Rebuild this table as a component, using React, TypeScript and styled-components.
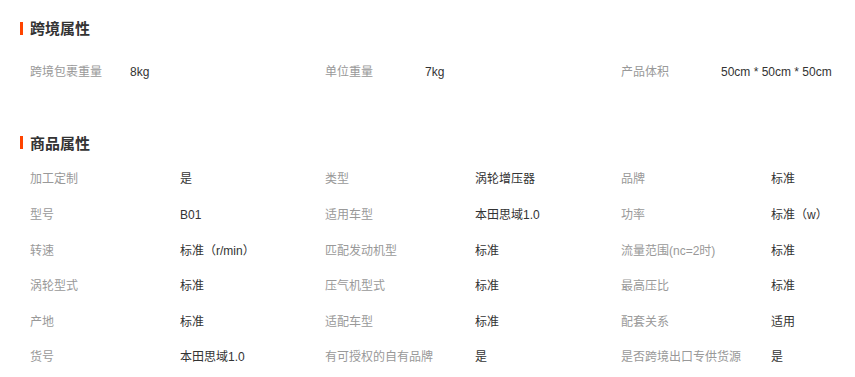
import React from "react";
import styled, { createGlobalStyle } from "styled-components";

const GlobalStyle = createGlobalStyle`
  html, body {
    margin: 0;
    padding: 0;
    background: #fff;
    overflow: hidden;
  }
  body {
    font-family: "Liberation Sans", "Noto Sans CJK SC", sans-serif;
    font-size: 12px;
    color: #333;
  }
`;

const Page = styled.div`
  padding: 20px 0 0 20px;
  width: 835px;
`;

const Section = styled.section<{ $gapAfter?: number }>`
  margin-bottom: ${(p) => p.$gapAfter ?? 0}px;
`;

const Heading = styled.h3<{ $gap: number }>`
  display: flex;
  align-items: center;
  margin: 0 0 ${(p) => p.$gap}px 0;
  height: 16px;
  font-size: 15px;
  line-height: 16px;
  font-weight: 700;
  color: #333;
  font-family: "Noto Sans CJK SC", sans-serif;

  &::before {
    content: "";
    display: block;
    width: 3px;
    height: 13px;
    margin-right: 7px;
    background: #ff4400;
  }
`;

const Row = styled.div`
  display: grid;
  grid-template-columns: 295px 296px 1fr;
  padding-left: 10px;
  height: 35.6px;
  align-items: center;
`;

const Cell = styled.div`
  display: flex;
  align-items: center;
  line-height: 16px;
  white-space: nowrap;
`;

const Label = styled.span<{ $w: number }>`
  flex: 0 0 ${(p) => p.$w}px;
  color: #999;
`;

const Value = styled.span`
  color: #333;
`;

type Pair = [string, string];

const cross: Pair[][] = [
  [
    ["跨境包裹重量", "8kg"],
    ["单位重量", "7kg"],
    ["产品体积", "50cm * 50cm * 50cm"],
  ],
];

const goods: Pair[][] = [
  [
    ["加工定制", "是"],
    ["类型", "涡轮增压器"],
    ["品牌", "标准"],
  ],
  [
    ["型号", "B01"],
    ["适用车型", "本田思域1.0"],
    ["功率", "标准（w）"],
  ],
  [
    ["转速", "标准（r/min）"],
    ["匹配发动机型", "标准"],
    ["流量范围(nc=2时)", "标准"],
  ],
  [
    ["涡轮型式", "标准"],
    ["压气机型式", "标准"],
    ["最高压比", "标准"],
  ],
  [
    ["产地", "标准"],
    ["适配车型", "标准"],
    ["配套关系", "适用"],
  ],
  [
    ["货号", "本田思域1.0"],
    ["有可授权的自有品牌", "是"],
    ["是否跨境出口专供货源", "是"],
  ],
];

const AttrRows: React.FC<{ rows: Pair[][]; labelWidth: number }> = ({ rows, labelWidth }) => (
  <>
    {rows.map((row, i) => (
      <Row key={i}>
        {row.map(([k, v]) => (
          <Cell key={k}>
            <Label $w={labelWidth}>{k}</Label>
            <Value>{v}</Value>
          </Cell>
        ))}
      </Row>
    ))}
  </>
);

export default function App() {
  return (
    <>
      <GlobalStyle />
      <Page>
        <Section $gapAfter={45}>
          <Heading $gap={18}>跨境属性</Heading>
          <AttrRows rows={cross} labelWidth={100} />
        </Section>
        <Section>
          <Heading $gap={11}>商品属性</Heading>
          <AttrRows rows={goods} labelWidth={150} />
        </Section>
      </Page>
    </>
  );
}
